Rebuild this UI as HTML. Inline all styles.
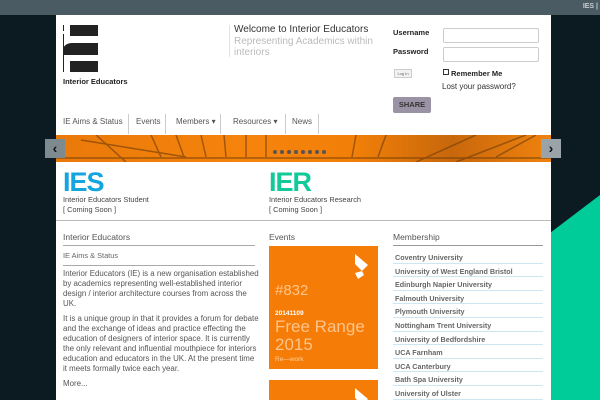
<!DOCTYPE html>
<html><head><meta charset="utf-8"><style>
*{margin:0;padding:0;box-sizing:border-box}
body{width:600px;height:400px;overflow:hidden;background:#0c1a22;font-family:"Liberation Sans",sans-serif;position:relative;color:#444}
.top{position:absolute;left:0;top:0;width:600px;height:15px;background:#4b5b63}
.top span{position:absolute;right:2px;top:3px;font-size:7px;font-weight:bold;color:#c8d0d4}
.tri{position:absolute;left:0;top:0}
.c{position:absolute;left:56px;top:15px;width:495px;height:385px;background:#fff;overflow:hidden}
.a{position:absolute}
.nav{font-size:8px;color:#555}
.nav span{position:absolute;top:102px}
.sep{position:absolute;top:99px;width:1px;height:20px;background:#ccc}
input{border:1px solid #ccc;border-radius:2px}
.mem div{height:13.6px;border-bottom:1px solid #cde6f2;font-size:7.2px;font-weight:bold;color:#666;padding:3px 0 0 2px}
p{font-size:7.9px;line-height:10px;color:#555;margin-bottom:5px}
</style></head><body>
<div class="top"><span>IES |</span></div>
<svg class="tri" width="600" height="400"><polygon points="600,195 600,400 330,400" fill="#00cc99"/></svg>
<div class="c">
 <!-- logo -->
 <div class="a" style="left:7px;top:10px;width:1px;height:47px;background:#222"></div>
 <div class="a" style="left:7px;top:16px;width:1px;height:3px;background:#fff"></div>
 <div class="a" style="left:14px;top:10px;width:28px;height:11px;background:#222"></div>
 <div class="a" style="left:7px;top:28px;width:35px;height:12px;background:#222;border-top-left-radius:9px 7px"></div>
 <div class="a" style="left:14px;top:46px;width:28px;height:11px;background:#222"></div>
 <div class="a" style="left:7px;top:62px;font-size:7.5px;font-weight:bold;color:#222">Interior Educators</div>
 <!-- welcome -->
 <div class="a" style="left:173px;top:10px;width:1px;height:32px;background:#cdece6"></div>
 <div class="a" style="left:178px;top:9px;font-size:10px;color:#333">Welcome to Interior Educators</div>
 <div class="a" style="left:178px;top:21px;font-size:10px;color:#bbb;line-height:11px;width:150px">Representing Academics within interiors</div>
 <!-- login -->
 <div class="a" style="left:337px;top:13px;font-size:7.5px;font-weight:bold;color:#222">Username</div>
 <div class="a" style="left:337px;top:32px;font-size:7.5px;font-weight:bold;color:#222">Password</div>
 <input class="a" style="left:387px;top:13px;width:96px;height:15px">
 <input class="a" style="left:387px;top:32px;width:96px;height:15px">
 <div class="a" style="left:338px;top:54px;width:18px;height:9px;border:1px solid #ccc;background:#f2f2f2;font-size:4px;text-align:center;line-height:7px;color:#666">Log In</div>
 <div class="a" style="left:387px;top:54px;width:6px;height:6px;border:1px solid #333"></div>
 <div class="a" style="left:395px;top:54px;font-size:7.5px;font-weight:bold;color:#222">Remember Me</div>
 <div class="a" style="left:386px;top:67px;font-size:8px;color:#333">Lost your password?</div>
 <div class="a" style="left:337px;top:82px;width:38px;height:16px;background:#9a93a6;border-radius:2px;font-size:7.5px;font-weight:bold;color:#333;text-align:center;line-height:16px">SHARE</div>
 <!-- nav -->
 <div class="nav">
  <span style="left:7px">IE Aims &amp; Status</span><span style="left:80px">Events</span><span style="left:120px">Members ▾</span><span style="left:177px">Resources ▾</span><span style="left:236px">News</span>
 </div>
 <div class="sep" style="left:72px"></div><div class="sep" style="left:109px"></div><div class="sep" style="left:164px"></div><div class="sep" style="left:229px"></div><div class="sep" style="left:262px"></div>
 <!-- slider -->
 <div class="a" style="left:0;top:120px;width:495px;height:27px;background:linear-gradient(90deg,#e9790a,#f6840c 40%,#f28008 60%,#c8670c 80%,#f0830d);overflow:hidden">
  <svg width="495" height="27"><g stroke="#6b3a08" stroke-width="1.5" fill="none" opacity=".6"><line x1="25" y1="5" x2="130" y2="22"/><line x1="40" y1="0" x2="70" y2="27"/><line x1="0" y1="23" x2="495" y2="23"/><line x1="95" y1="0" x2="105" y2="22"/><line x1="120" y1="0" x2="128" y2="22"/><line x1="145" y1="0" x2="150" y2="22"/><line x1="168" y1="0" x2="170" y2="22"/><line x1="190" y1="0" x2="190" y2="22"/><line x1="210" y1="0" x2="210" y2="22"/><line x1="300" y1="0" x2="296" y2="22"/><line x1="330" y1="0" x2="322" y2="22"/><line x1="360" y1="27" x2="420" y2="0"/><line x1="400" y1="27" x2="470" y2="0"/><line x1="440" y1="22" x2="480" y2="0"/></g>
  <g fill="#555">
  <circle cx="219" cy="17" r="2"/><circle cx="226" cy="17" r="2"/><circle cx="233" cy="17" r="2"/><circle cx="240" cy="17" r="2"/><circle cx="247" cy="17" r="2"/><circle cx="254" cy="17" r="2"/><circle cx="261" cy="17" r="2"/><circle cx="268" cy="17" r="2"/></g></svg>
 </div>
 <!-- IES / IER -->
 <div class="a" style="left:7px;top:152px;font-size:27px;font-weight:bold;color:#14a5e0;letter-spacing:-1px">IES</div>
 <div class="a" style="left:7px;top:180px;font-size:7.4px;color:#444;line-height:10px">Interior Educators Student<br>[ Coming Soon ]</div>
 <div class="a" style="left:213px;top:152px;font-size:27px;font-weight:bold;color:#12c99a;letter-spacing:-1px">IER</div>
 <div class="a" style="left:213px;top:180px;font-size:7.4px;color:#444;line-height:10px">Interior Educators Research<br>[ Coming Soon ]</div>
 <div class="a" style="left:0;top:205px;width:495px;height:1px;background:#bbb"></div>
 <!-- left col -->
 <div class="a" style="left:7px;top:217px;font-size:8.5px;color:#555">Interior Educators</div>
 <div class="a" style="left:7px;top:230px;width:192px;height:1px;background:#aaa"></div>
 <div class="a" style="left:7px;top:236px;font-size:7.4px;color:#666">IE Aims &amp; Status</div>
 <div class="a" style="left:7px;top:250px;width:192px;height:1px;background:#aaa"></div>
 <div class="a" style="left:7px;top:254px;width:196px">
  <p>Interior Educators (IE) is a new organisation established by academics representing well-established interior design / interior architecture courses from across the UK.</p>
  <p>It is a unique group in that it provides a forum for debate and the exchange of ideas and practice effecting the education of designers of interior space. It is currently the only relevant and influential mouthpiece for interiors education and educators in the UK. At the present time it meets formally twice each year.</p>
  <p>More...</p>
 </div>
 <!-- events -->
 <div class="a" style="left:213px;top:217px;font-size:8.5px;color:#555">Events</div>
 <div class="a" style="left:213px;top:231px;width:109px;height:123px;background:#f57c06;color:#ffd9b0">
  <svg class="a" style="left:83px;top:8px" width="20" height="26"><polygon points="3,0 16,11 10,17 3,10" fill="#fff"/><polygon points="3,19 10,17 12,21 6,25" fill="#fff"/></svg>
  <div class="a" style="left:6px;top:36px;font-size:15px;color:#ffc48a">#832</div>
  <div class="a" style="left:6px;top:64px;font-size:6.5px;font-weight:bold;color:#fff">20141109</div>
  <div class="a" style="left:6px;top:72px;font-size:17px;line-height:18px;color:#ffc48a">Free Range<br>2015</div>
  <div class="a" style="left:6px;top:110px;font-size:6.5px;color:#ffd2a0">Re—work</div>
 </div>
 <div class="a" style="left:213px;top:365px;width:109px;height:30px;background:#f57c06"><svg class="a" style="left:83px;top:8px" width="20" height="26"><polygon points="3,0 16,11 10,17 3,10" fill="#fff"/></svg></div>
 <!-- membership -->
 <div class="a" style="left:337px;top:217px;font-size:8.5px;color:#555">Membership</div>
 <div class="a" style="left:337px;top:230px;width:150px;height:1px;background:#999"></div>
 <div class="a mem" style="left:337px;top:235px;width:150px">
  <div>Coventry University</div><div>University of West England Bristol</div><div>Edinburgh Napier University</div><div>Falmouth University</div><div>Plymouth University</div><div>Nottingham Trent University</div><div>University of Bedfordshire</div><div>UCA Farnham</div><div>UCA Canterbury</div><div>Bath Spa University</div><div>University of Ulster</div>
 </div>
</div>
<!-- arrows -->
<div class="a" style="position:absolute;left:45px;top:139px;width:20px;height:19px;background:#7d8a90;color:#111;font-size:14px;text-align:center;line-height:19px;font-weight:bold">‹</div>
<div class="a" style="position:absolute;left:541px;top:139px;width:20px;height:19px;background:#9aa4a8;color:#111;font-size:14px;text-align:center;line-height:19px;font-weight:bold">›</div>
</body></html>
